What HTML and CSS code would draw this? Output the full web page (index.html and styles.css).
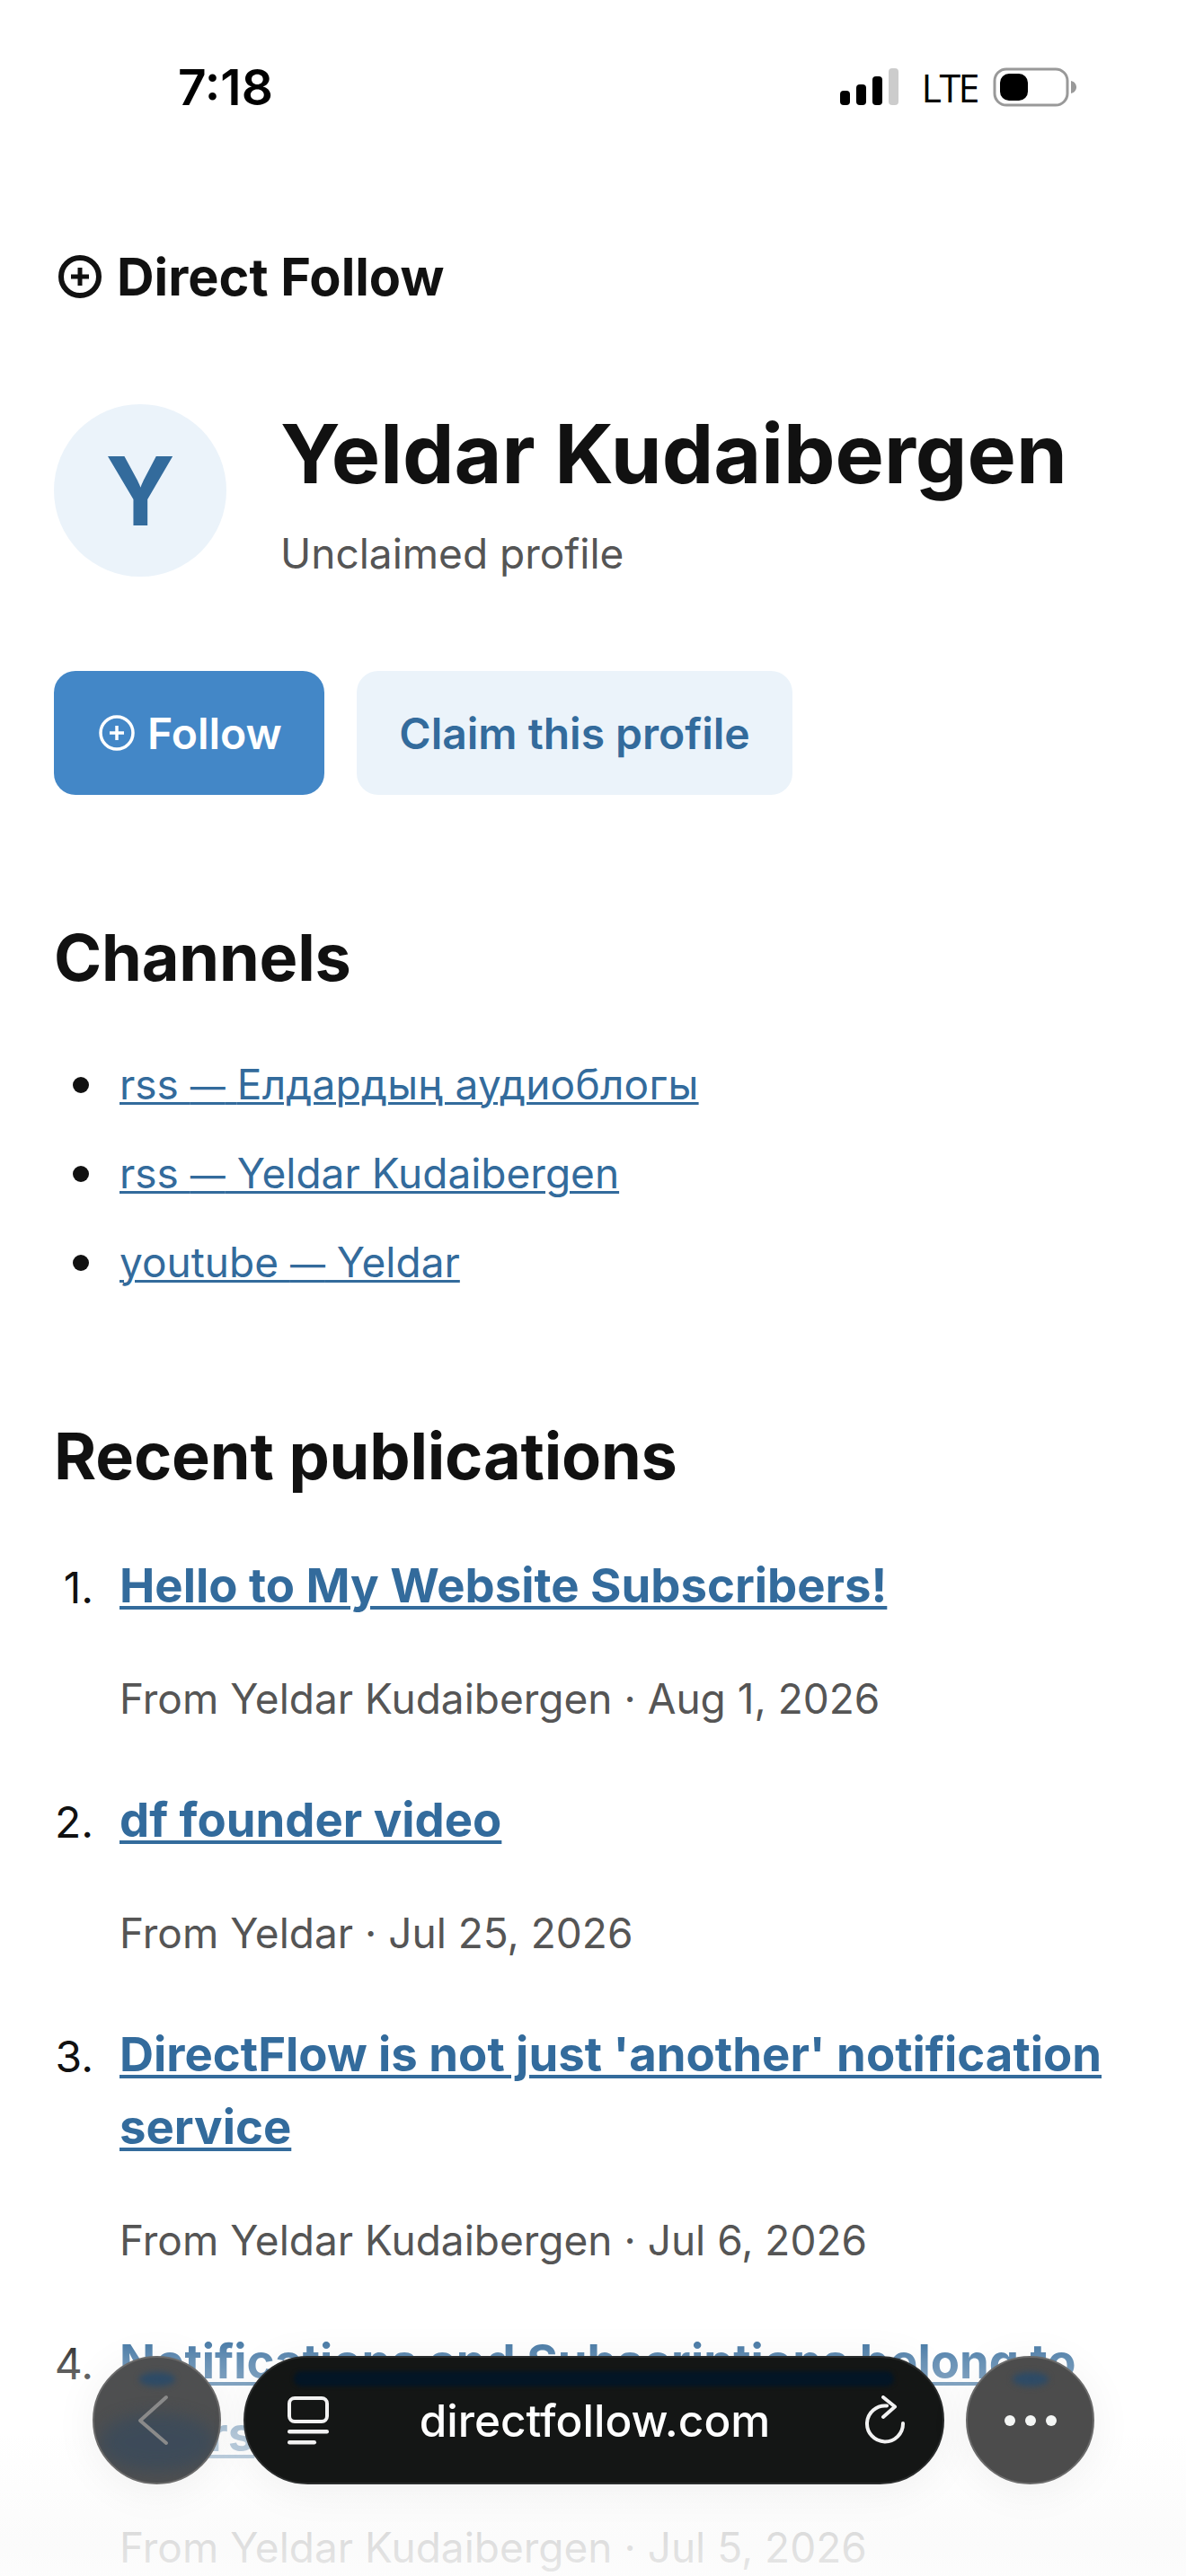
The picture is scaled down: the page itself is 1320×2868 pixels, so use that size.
FILE: index.html
```html
<!DOCTYPE html>
<html lang="en">
<head>
<meta charset="utf-8">
<title>Yeldar Kudaibergen</title>
<link rel="stylesheet" href="styles.css">
</head>
<body>
<div class="status">
  <span class="time">7:18</span>
  <div class="status-right">
    <svg class="signal" width="66" height="42" viewBox="0 0 66 42"><rect x="0" y="25" width="11" height="16" rx="4" fill="#000"/><rect x="18" y="18" width="11" height="23" rx="4" fill="#000"/><rect x="36" y="9" width="11" height="32" rx="4" fill="#000"/><rect x="54" y="0" width="11" height="41" rx="4" fill="#ccc"/></svg>
    <span class="lte">LTE</span>
    <svg class="battery" width="94" height="44" viewBox="0 0 94 44"><rect x="2" y="2" width="81" height="40" rx="13" fill="none" stroke="#999" stroke-width="3"/><rect x="8" y="7" width="31" height="30" rx="10" fill="#000"/><path d="M87 15 C91 16 93 19 93 22 C93 25 91 28 87 29Z" fill="#999"/></svg>
  </div>
</div>
<main class="page">
  <header class="brand">
    <svg class="brand-icon" width="48" height="48" viewBox="0 0 48 48"><circle cx="24" cy="24" r="21" fill="none" stroke="#111" stroke-width="6"/><path d="M24 14v20M14 24h20" stroke="#111" stroke-width="5" fill="none"/></svg>
    <span>Direct Follow</span>
  </header>
  <section class="profile">
    <div class="avatar">Y</div>
    <div class="identity">
      <h1>Yeldar Kudaibergen</h1>
      <p class="sub">Unclaimed profile</p>
    </div>
  </section>
  <div class="actions">
    <span class="btn primary"><svg width="40" height="40" viewBox="0 0 40 40"><circle cx="20" cy="20" r="18" fill="none" stroke="#fff" stroke-width="3.5"/><path d="M20 12v16M12 20h16" stroke="#fff" stroke-width="3.5" fill="none"/></svg>Follow</span>
    <span class="btn secondary">Claim this profile</span>
  </div>
  <h2 class="h-channels">Channels</h2>
  <ul class="channels">
    <li><a>rss <span class="dash">—</span> <span class="wide">Елдардың аудиоблогы</span></a></li>
    <li><a>rss <span class="dash">—</span> Yeldar Kudaibergen</a></li>
    <li><a>youtube <span class="dash">—</span> Yeldar</a></li>
  </ul>
  <h2 class="h-recent">Recent publications</h2>
  <ol class="pubs">
    <li><a>Hello to My Website Subscribers!</a><p>From Yeldar Kudaibergen · Aug 1, 2026</p></li>
    <li><a>df founder video</a><p>From Yeldar · Jul 25, 2026</p></li>
    <li><a>DirectFlow is not just 'another' notification service</a><p>From Yeldar Kudaibergen · Jul 6, 2026</p></li>
    <li><a>Notifications and Subscriptions belong to Users</a><p>From Yeldar Kudaibergen · Jul 5, 2026</p></li>
  </ol>
</main>
<div class="fade"></div>
<nav class="browser">
  <div class="round back">
    <span class="smear top"></span>
    <span class="smear users"></span>
    <svg class="chev" width="36" height="60" viewBox="0 0 36 60"><path d="M33 4 L4 30 L33 55" fill="none" stroke="#8a8a8a" stroke-width="4" stroke-linecap="round" stroke-linejoin="round"/></svg>
  </div>
  <div class="pill">
    <span class="smear bar"></span>
    <svg class="tabs" width="46" height="54" viewBox="0 0 46 54"><rect x="2" y="2" width="42" height="26" rx="6" fill="none" stroke="#f2f2f2" stroke-width="4"/><rect x="0" y="37" width="46" height="4.5" rx="2.2" fill="#f2f2f2"/><rect x="0" y="49" width="32" height="4.5" rx="2.2" fill="#f2f2f2"/></svg>
    <span class="url">directfollow.com</span>
    <svg class="reload" width="46" height="56" viewBox="0 0 46 56"><path d="M42 31 A20 20 0 1 1 24 11.5" fill="none" stroke="#f2f2f2" stroke-width="4" stroke-linecap="round"/><path d="M20 2 L33 12.5 L20 24" fill="none" stroke="#f2f2f2" stroke-width="4" stroke-linecap="round" stroke-linejoin="round"/></svg>
  </div>
  <div class="round more">
    <span class="smear top"></span>
    <span class="dot"></span><span class="dot"></span><span class="dot"></span>
  </div>
</nav>
</body>
</html>
```
FILE: styles.css
```css
* { box-sizing: border-box; }
html, body { margin: 0; padding: 0; height: 2868px; overflow: hidden; background: #fff; }
body { font-family: Inter, "Noto Sans", sans-serif; color: #111; position: relative; }

.status { display: flex; justify-content: space-between; align-items: center; height: 76px; margin-top: 59px; padding: 0 121px 0 198px; }
.time { font-size: 55px; font-weight: 600; color: #000; }
.status-right { display: flex; align-items: center; }
.lte { font-family: "Open Sans", sans-serif; font-size: 43px; color: #000; margin: 0 17px 0 24px; font-weight: 500; letter-spacing: -2.5px; }

.page { padding: 0 60px; }
.brand { display: flex; align-items: center; gap: 17px; margin-top: 138px; padding-left: 5px; font-size: 57.6px; font-weight: 700; height: 70px; }
.profile { display: flex; align-items: flex-start; gap: 60px; margin-top: 107px; }
.avatar { width: 192px; height: 192px; border-radius: 50%; background: #ebf3fa; color: #336b9c; font-size: 105.6px; font-weight: 650; display: flex; align-items: center; justify-content: center; flex: none; }
.identity { padding-top: 5px; }
h1 { margin: 0; font-size: 91.3px; font-weight: 700; line-height: 100px; }
.sub { margin: 35px 0 0; font-size: 46px; color: #555; line-height: 52px; }
.actions { display: flex; gap: 36px; margin-top: 105px; }
.btn { display: flex; align-items: center; justify-content: center; gap: 14px; height: 138px; border-radius: 24px; font-size: 48px; font-weight: 600; }
.primary { width: 301px; padding-left: 3px; background: #4387c7; color: #fff; }
.secondary { width: 485px; background: #ebf3fa; color: #336b9c; }

h2 { margin: 0; font-size: 72px; font-weight: 700; line-height: 88px; letter-spacing: -0.2px; }
.h-channels { margin-top: 137px; }
a { color: #336b9c; text-decoration: underline; text-underline-offset: 3px; text-decoration-thickness: 3px; }
ul.channels { list-style: none; margin: 69px 0 0; padding: 0 0 0 73px; font-size: 46px; line-height: 56px; }
.channels li { position: relative; margin-bottom: 43px; }
.channels li::before { content: ""; position: absolute; left: -52px; top: 20px; width: 18px; height: 18px; border-radius: 50%; background: #111; }
.dash { font-size: 39px; line-height: 1; }
.wide { letter-spacing: .25px; }
.h-recent { margin-top: 144px; }
ol.pubs { list-style: none; counter-reset: pub; margin: 60px 0 0; padding: 0 0 0 73px; }
.pubs li { position: relative; counter-increment: pub; margin-bottom: 67px; font-size: 52.65px; line-height: 81px; }
.pubs li::before { content: counter(pub) "."; position: absolute; right: 100%; margin-right: 29px; top: 2px; font-size: 48px; color: #111; }
.pubs a { font-weight: 700; text-underline-offset: 4px; text-decoration-thickness: 4px; }
.pubs p { margin: 57px 0 0; font-size: 46px; line-height: 56px; color: #555; }

.fade { position: absolute; left: 0; right: 0; top: 2590px; height: 278px; background: linear-gradient(to bottom, rgba(255,255,255,0) 0%, rgba(255,255,255,.27) 14%, rgba(255,255,255,.64) 43%, rgba(250,250,250,.84) 88%, rgba(252,252,252,.88) 100%); }
.browser { position: absolute; left: 103px; top: 2623px; width: 1115px; height: 143px; display: flex; justify-content: space-between; }
.round { position: relative; width: 143px; height: 143px; border-radius: 50%; background: #4c4c4c; border: 2px solid #6a6a6a; display: flex; align-items: center; justify-content: center; gap: 11px; box-shadow: 0 6px 50px rgba(0,0,0,.06); overflow: hidden; }
.back { background: #4e4f50; }
.chev { position: relative; margin-right: 10px; }
.dot { width: 12px; height: 12px; border-radius: 50%; background: #f4f6f5; }
.pill { position: relative; width: 780px; height: 143px; border-radius: 72px; background: #141615; border: 2px solid #2a2c2c; display: flex; align-items: center; padding: 0 40px 0 47px; box-shadow: 0 6px 50px rgba(0,0,0,.06); overflow: hidden; }
.url { flex: 1; text-align: center; color: #fff; font-size: 49.5px; font-weight: 500; padding-right: 4px; }
.smear { position: absolute; border-radius: 50%; filter: blur(3px); }
.smear.top { left: 50px; top: 16px; width: 40px; height: 16px; background: #2e4b66; }
.smear.users { left: 6px; top: 62px; width: 128px; height: 64px; background: #33495f; filter: blur(9px); opacity: .6; }
.smear.bar { left: 54px; right: 54px; top: 15px; height: 17px; border-radius: 9px; background: #031525; filter: blur(2px); }
```
